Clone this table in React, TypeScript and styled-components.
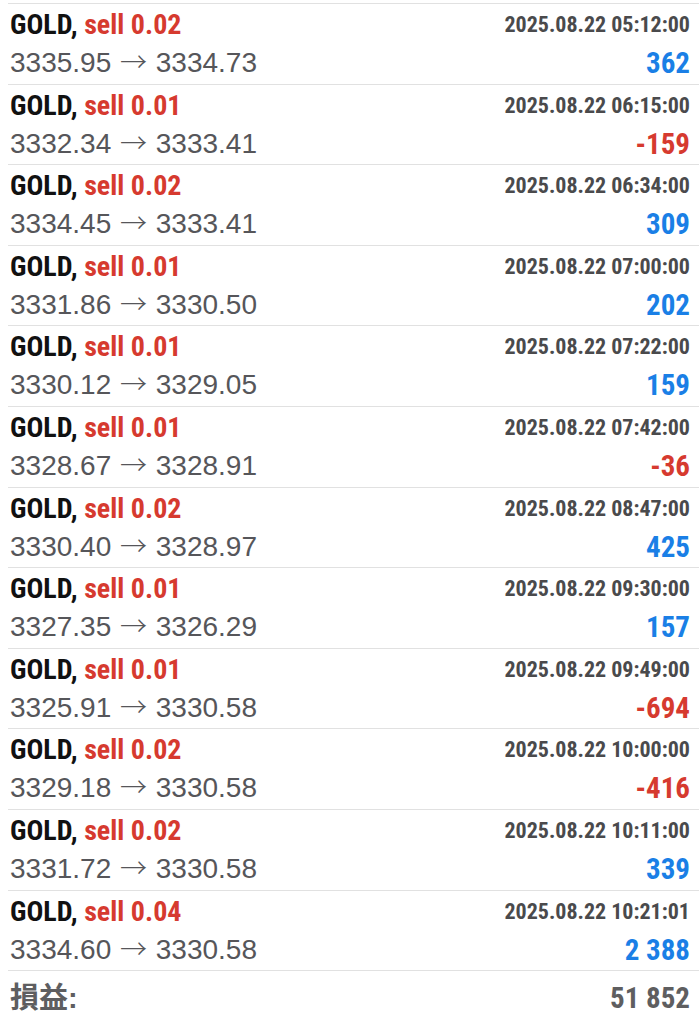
import styled, { createGlobalStyle } from "styled-components";

interface Deal {
  lot: string;
  open: string;
  close: string;
  time: string;
  profit: string;
}

const deals: Deal[] = [
  { lot: "0.02", open: "3335.95", close: "3334.73", time: "2025.08.22 05:12:00", profit: "362" },
  { lot: "0.01", open: "3332.34", close: "3333.41", time: "2025.08.22 06:15:00", profit: "-159" },
  { lot: "0.02", open: "3334.45", close: "3333.41", time: "2025.08.22 06:34:00", profit: "309" },
  { lot: "0.01", open: "3331.86", close: "3330.50", time: "2025.08.22 07:00:00", profit: "202" },
  { lot: "0.01", open: "3330.12", close: "3329.05", time: "2025.08.22 07:22:00", profit: "159" },
  { lot: "0.01", open: "3328.67", close: "3328.91", time: "2025.08.22 07:42:00", profit: "-36" },
  { lot: "0.02", open: "3330.40", close: "3328.97", time: "2025.08.22 08:47:00", profit: "425" },
  { lot: "0.01", open: "3327.35", close: "3326.29", time: "2025.08.22 09:30:00", profit: "157" },
  { lot: "0.01", open: "3325.91", close: "3330.58", time: "2025.08.22 09:49:00", profit: "-694" },
  { lot: "0.02", open: "3329.18", close: "3330.58", time: "2025.08.22 10:00:00", profit: "-416" },
  { lot: "0.02", open: "3331.72", close: "3330.58", time: "2025.08.22 10:11:00", profit: "339" },
  { lot: "0.04", open: "3334.60", close: "3330.58", time: "2025.08.22 10:21:01", profit: "2 388" },
];

const condensed = `"Roboto Condensed", Roboto, "Liberation Sans", sans-serif`;

const GlobalStyle = createGlobalStyle`
  body {
    margin: 0;
    background: #ffffff;
    font-family: "Liberation Sans", Arial, sans-serif;
  }
`;

const List = styled.div`
  padding-top: 3px;
  padding-left: 8px;
`;

const Row = styled.div`
  height: 80.6px;
  box-sizing: border-box;
  border-top: 1px solid #e1e1e1;
  padding: 2px 9px 0 2px;
  display: grid;
  grid-template-columns: 1fr auto;
  grid-template-rows: 38px 38px;
  align-items: start;
`;

const Title = styled.div`
  font-family: ${condensed};
  font-stretch: condensed;
  font-weight: 700;
  font-size: 28px;
  line-height: 38px;
  color: #111111;
  white-space: nowrap;
`;

const Sell = styled.span`
  color: #d63a2f;
`;

const Time = styled.div`
  font-family: ${condensed};
  font-stretch: condensed;
  font-weight: 700;
  font-size: 22px;
  line-height: 38px;
  color: #4a4a4c;
  text-align: right;
`;

const Prices = styled.div`
  font-size: 28px;
  line-height: 38px;
  color: #56565a;
  white-space: nowrap;
`;

const Arrow = styled.span`
  font-family: "Noto Sans CJK JP", sans-serif;
  font-size: 27px;
  font-weight: 300;
  line-height: 0;
  margin: 0 1px;
`;

const Profit = styled.div<{ $loss: boolean }>`
  font-family: ${condensed};
  font-stretch: condensed;
  font-weight: 700;
  font-size: 29px;
  line-height: 38px;
  color: ${(p) => (p.$loss ? "#d63a2f" : "#1a7fe6")};
  text-align: right;
`;

const Total = styled.div`
  border-top: 1px solid #e1e1e1;
  padding: 7px 9px 0 2px;
  display: flex;
  justify-content: space-between;
  align-items: baseline;
  color: #5e5e60;
`;

const TotalLabel = styled.div`
  font-family: "Liberation Sans", "Noto Sans CJK JP", sans-serif;
  font-weight: 700;
  font-size: 29px;
  line-height: 40px;
`;

const TotalValue = styled.div`
  font-family: ${condensed};
  font-stretch: condensed;
  font-weight: 700;
  font-size: 29px;
  line-height: 40px;
`;

export default function App() {
  return (
    <>
      <GlobalStyle />
      <List>
        {deals.map((d, i) => (
          <Row key={i}>
            <Title>
              GOLD, <Sell>sell {d.lot}</Sell>
            </Title>
            <Time>{d.time}</Time>
            <Prices>
              {d.open} <Arrow>→</Arrow> {d.close}
            </Prices>
            <Profit $loss={d.profit.startsWith("-")}>{d.profit}</Profit>
          </Row>
        ))}
        <Total>
          <TotalLabel>損益:</TotalLabel>
          <TotalValue>51 852</TotalValue>
        </Total>
      </List>
    </>
  );
}
